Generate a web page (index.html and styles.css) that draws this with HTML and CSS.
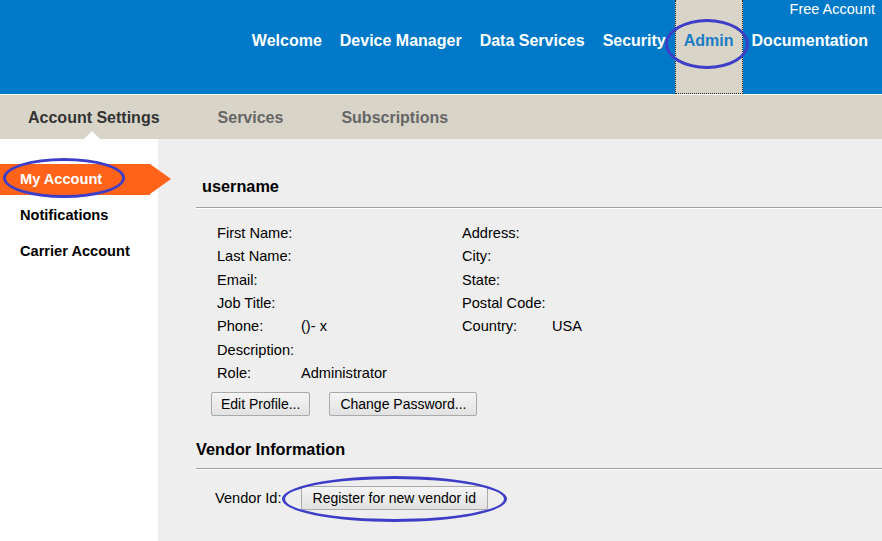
FILE: index.html
```html
<!DOCTYPE html>
<html lang="en">
<head>
<meta charset="utf-8">
<title>Account Settings</title>
<link rel="stylesheet" href="styles.css">
</head>
<body>
<div class="page">
  <header class="topnav">
    <a class="nav-item">Welcome</a>
    <a class="nav-item">Device Manager</a>
    <a class="nav-item">Data Services</a>
    <a class="nav-item">Security</a>
    <a class="nav-item nav-active">Admin<span class="mark mark-admin"></span></a>
    <a class="nav-item nav-last">Documentation</a>
    <span class="free-account">Free Account</span>
  </header>
  <nav class="subnav">
    <a class="sub-item sub-active">Account Settings</a>
    <a class="sub-item">Services</a>
    <a class="sub-item">Subscriptions</a>
  </nav>
  <div class="main">
    <aside class="sidebar">
      <a class="side-item side-active">My Account<span class="mark mark-account"></span></a>
      <a class="side-item">Notifications</a>
      <a class="side-item">Carrier Account</a>
    </aside>
    <section class="content">
      <h2 class="section-title user-title">username</h2>
      <div class="fields">
        <span>First Name:</span><span></span><span>Address:</span><span></span>
        <span>Last Name:</span><span></span><span>City:</span><span></span>
        <span>Email:</span><span></span><span>State:</span><span></span>
        <span>Job Title:</span><span></span><span>Postal Code:</span><span></span>
        <span>Phone:</span><span>()- x</span><span>Country:</span><span>USA</span>
        <span>Description:</span><span></span><span></span><span></span>
        <span>Role:</span><span>Administrator</span><span></span><span></span>
      </div>
      <div class="actions">
        <button class="btn btn-edit">Edit Profile...</button>
        <button class="btn btn-pass">Change Password...</button>
      </div>
      <h2 class="section-title vendor-title">Vendor Information</h2>
      <div class="vendor-row">
        <span class="vendor-label">Vendor Id:</span>
        <button class="btn btn-register">Register for new vendor id<span class="mark mark-register"></span></button>
      </div>
    </section>
  </div>
</div>
</body>
</html>
```
FILE: styles.css
```css
* { box-sizing: border-box; }

html, body {
  margin: 0;
  padding: 0;
  height: 100%;
}

body {
  font-family: "Liberation Sans", Arial, sans-serif;
  font-size: 14px;
  color: #000;
  background: #fff;
}

.page {
  display: flex;
  flex-direction: column;
  min-height: 541px;
  height: 100%;
}

/* ---------- top navigation ---------- */
.topnav {
  display: grid;
  grid-template-columns: repeat(6, auto);
  justify-content: end;
  height: 95px;
  padding-right: 5px;
  background: #0079c8;
  border-bottom: 1px solid #fff;
}

.nav-item {
  grid-row: 1;
  padding: 32px 9px 0;
  font-weight: bold;
  font-size: 16px;
  line-height: 18px;
  color: #fff;
  white-space: nowrap;
}

.nav-last {
  grid-column: 6;
}

.nav-active {
  position: relative;
  padding-left: 8px;
  padding-right: 8px;
  background: #d8d4c8;
  color: #1a7cc6;
  border-left: 1px dotted #222;
  border-right: 1px dotted #222;
  border-bottom: 1px dotted #222;
}

.free-account {
  grid-row: 1;
  grid-column: 6;
  justify-self: end;
  align-self: start;
  margin: 1px 2px 0 0;
  font-size: 14.5px;
  line-height: 16px;
  color: #fff;
  white-space: nowrap;
}

/* ---------- sub navigation ---------- */
.subnav {
  display: flex;
  gap: 58px;
  height: 44px;
  padding-left: 28px;
  background: #d8d4c8;
}

.sub-item {
  position: relative;
  padding-top: 1px;
  font-weight: bold;
  font-size: 16px;
  line-height: 43px;
  color: #666;
  white-space: nowrap;
}

.sub-active {
  color: #333;
}

.sub-active::after {
  content: "";
  position: absolute;
  left: 50%;
  bottom: 0;
  margin-left: -10px;
  border-left: 8px solid transparent;
  border-right: 8px solid transparent;
  border-bottom: 8px solid #fff;
}

/* ---------- main area ---------- */
.main {
  display: flex;
  flex: 1;
}

.sidebar {
  width: 158px;
  flex: none;
  padding-top: 25px;
  background: #fff;
  display: flex;
  flex-direction: column;
  gap: 5px;
}

.side-item {
  position: relative;
  display: block;
  height: 31px;
  line-height: 31px;
  padding-left: 20px;
  font-weight: bold;
  font-size: 14.6px;
  color: #000;
  white-space: nowrap;
}

.side-active {
  width: 150px;
  background: #ff6319;
  color: #fff;
}

.side-active::after {
  content: "";
  position: absolute;
  left: 100%;
  top: 0;
  border-top: 15.5px solid transparent;
  border-bottom: 15.5px solid transparent;
  border-left: 21px solid #ff6319;
}

.content {
  flex: 1;
  background: #eeeeee;
  padding: 37px 0 0 38px;
}

.section-title {
  margin: 0;
  font-weight: bold;
  font-size: 16.3px;
  line-height: 20px;
  border-bottom: 1px solid #a0a0a0;
  box-shadow: 0 1px 0 #fff;
}

.user-title {
  padding: 0 0 11px 6px;
}

.vendor-title {
  margin-top: 23px;
  padding: 0 0 9px 0;
}

.fields {
  display: grid;
  grid-template-columns: 84px 161px 90px auto;
  grid-auto-rows: 23.35px;
  line-height: 23.35px;
  margin-top: 14px;
  padding-left: 21px;
  font-size: 14.6px;
  white-space: nowrap;
}

.actions {
  display: flex;
  gap: 19px;
  margin-top: 7px;
  padding-left: 15px;
}

.btn {
  position: relative;
  height: 24px;
  padding: 0 9px;
  font-family: "Liberation Sans", Arial, sans-serif;
  font-size: 14px;
  color: #000;
  background: linear-gradient(#f4f4f4, #e2e2e2);
  border: 1px solid #a9a9a9;
  border-radius: 2px;
  white-space: nowrap;
}

.btn-pass { padding: 0 10px; }
.btn-register { padding: 0 11px; }

.vendor-row {
  display: flex;
  align-items: center;
  gap: 19px;
  margin-top: 17px;
  padding-left: 19px;
  font-size: 14.6px;
}

/* ---------- annotation ellipses ---------- */
.mark {
  position: absolute;
  border: 3px solid #3d3dc8;
  border-radius: 50%;
  pointer-events: none;
}

.mark-admin {
  left: -11px;
  top: 19px;
  width: 84px;
  height: 50px;
}

.mark-account {
  left: 3px;
  top: -6px;
  width: 122px;
  height: 40px;
}

.mark-register {
  left: -20px;
  top: -11px;
  width: 225px;
  height: 46px;
}
```
